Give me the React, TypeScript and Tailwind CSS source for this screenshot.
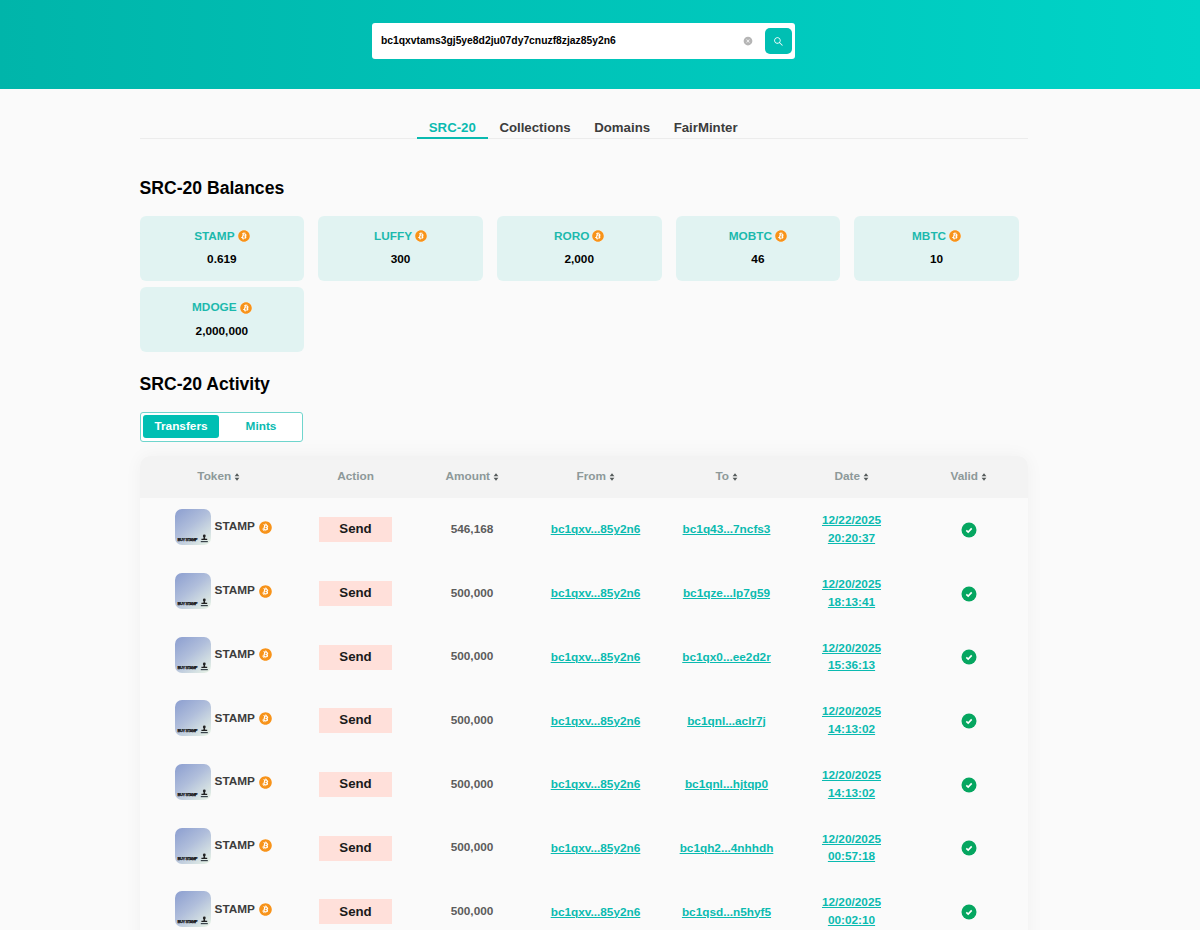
import React, { useState } from 'react';
import { AiFillCloseCircle, AiOutlineSearch } from 'react-icons/ai';
import { FaBitcoin } from 'react-icons/fa';

const ADDRESS = 'bc1qxvtams3gj5ye8d2ju07dy7cnuzf8zjaz85y2n6';

const tabs = ['SRC-20', 'Collections', 'Domains', 'FairMinter'];

const balances = [
  { tick: 'STAMP', amount: '0.619' },
  { tick: 'LUFFY', amount: '300' },
  { tick: 'RORO', amount: '2,000' },
  { tick: 'MOBTC', amount: '46' },
  { tick: 'MBTC', amount: '10' },
  { tick: 'MDOGE', amount: '2,000,000' },
];

const columns = [
  { label: 'Token', sortable: true },
  { label: 'Action', sortable: false },
  { label: 'Amount', sortable: true },
  { label: 'From', sortable: true },
  { label: 'To', sortable: true },
  { label: 'Date', sortable: true },
  { label: 'Valid', sortable: true },
];

const transfers = [
  { amount: '546,168', to: 'bc1q43...7ncfs3', date: '12/22/2025', time: '20:20:37' },
  { amount: '500,000', to: 'bc1qze...lp7g59', date: '12/20/2025', time: '18:13:41' },
  { amount: '500,000', to: 'bc1qx0...ee2d2r', date: '12/20/2025', time: '15:36:13' },
  { amount: '500,000', to: 'bc1qnl...aclr7j', date: '12/20/2025', time: '14:13:02' },
  { amount: '500,000', to: 'bc1qnl...hjtqp0', date: '12/20/2025', time: '14:13:02' },
  { amount: '500,000', to: 'bc1qh2...4nhhdh', date: '12/20/2025', time: '00:57:18' },
  { amount: '500,000', to: 'bc1qsd...n5hyf5', date: '12/20/2025', time: '00:02:10' },
];

const rowGrid = 'grid grid-cols-[158px_116px_117px_130px_132px_118px_116px] items-center justify-items-center';
const link = 'text-[#0abab0] underline decoration-1 underline-offset-1';

const BitcoinBadge = ({ className }: { className: string }) => (
  <span className={`inline-flex rounded-full bg-white ${className}`}>
    <FaBitcoin className="w-full h-full text-[#f7931a]" />
  </span>
);

const SortIcon = () => (
  <svg width="6" height="8" viewBox="0 0 6 8" fill="#555b5b" className="ml-[2.5px]">
    <path d="M3 0.2 5.4 3.3H0.6Z" />
    <path d="M3 7.8 0.6 4.7H5.4Z" />
  </svg>
);

const StampThumb = () => (
  <svg width="36" height="36" viewBox="0 0 36 36">
    <defs>
      <linearGradient id="thumb" x1="0.1" y1="0" x2="0.9" y2="1">
        <stop offset="0" stopColor="#8fa1d1" />
        <stop offset="0.45" stopColor="#b0bedb" />
        <stop offset="1" stopColor="#e6f1e6" />
      </linearGradient>
    </defs>
    <rect width="36" height="36" rx="7" fill="url(#thumb)" />
    <text x="2.6" y="32.3" fontSize="4.1" fontWeight="900" textLength="20" stroke="#111" strokeWidth="0.25" fill="#111">BUY STAMP</text>
    <circle cx="29.3" cy="26.9" r="1.4" fill="#222" />
    <path d="M28.7 27h1.2l.3 2.7h2v1.4h-5.8v-1.4h2Z" fill="#222" />
    <path d="M25.8 32h7v1.2h-7Z" fill="#39434a" />
  </svg>
);

const ValidIcon = () => (
  <svg width="16" height="16" viewBox="0 0 16 16">
    <circle cx="8" cy="8" r="7.5" fill="#05a660" />
    <path d="m5.3 8.3 1.9 1.8 3.5-3.7" fill="none" stroke="#fff" strokeWidth="1.6" />
  </svg>
);

const App: React.FC = () => {
  const [query, setQuery] = useState(ADDRESS);
  const [activeTab, setActiveTab] = useState('SRC-20');
  const [view, setView] = useState<'Transfers' | 'Mints'>('Transfers');

  return (
    <div className="h-[930px] overflow-hidden bg-[#fafafa] font-['Liberation_Sans',Arial,sans-serif] font-bold text-[11.8px] text-black">
      <header className="h-[88.5px] pt-[23px] pl-[372px] bg-linear-to-r from-[#00b5aa] to-[#00d4c8]">
        <div className="flex items-center w-[423px] h-9 pl-[9px] pr-[3.5px] bg-white rounded-[3px]">
          <input
            value={query}
            onChange={(e) => setQuery(e.target.value)}
            className="flex-1 text-[10.33px] outline-none"
          />
          <button onClick={() => setQuery('')} className="mr-[12.5px] text-[#b5b5b5]">
            <AiFillCloseCircle size={10} />
          </button>
          <button className="flex items-center justify-center w-[26.5px] h-[26.5px] rounded-[5px] bg-[#00bfb3] text-white">
            <AiOutlineSearch size={11} />
          </button>
        </div>
      </header>

      <main className="w-[888px] ml-[139.5px]">
        <nav className="flex h-[50px] pt-[27px] pl-[277.5px] border-b border-[#ececec] text-[13.23px]">
          {tabs.map((tab) => (
            <button
              key={tab}
              onClick={() => setActiveTab(tab)}
              className={`h-[23px] px-[11.8px] pt-[3px] leading-4 border-b-2 ${
                activeTab === tab ? 'text-[#0abab0] border-[#0abab0]' : 'text-[#3c3c3c] border-transparent'
              }`}
            >
              {tab}
            </button>
          ))}
        </nav>

        <h2 className="mt-[37px] text-[17.6px] leading-6">SRC-20 Balances</h2>
        <div className="flex flex-wrap mt-4 gap-x-[14px] gap-y-[6.4px]">
          {balances.map((b) => (
            <div key={b.tick} className="flex flex-col items-center w-[164.7px] h-[65.3px] pt-[11px] rounded-[6px] bg-[#e1f3f2]">
              <div className="flex items-center gap-[3px] h-5 text-[#1cb9ad]">
                {b.tick}
                <BitcoinBadge className="w-3 h-3 mb-px" />
              </div>
              <div className="mt-[2.5px] leading-5">{b.amount}</div>
            </div>
          ))}
        </div>

        <h2 className="mt-5 text-[17.6px] leading-6">SRC-20 Activity</h2>
        <div className="flex w-[163px] h-[30px] mt-[15.5px] p-[2.5px] rounded-[3px] border border-[#6fd5cd] bg-white">
          {(['Transfers', 'Mints'] as const).map((v) => (
            <button
              key={v}
              onClick={() => setView(v)}
              className={`rounded-[3px] ${v === 'Transfers' ? 'w-[77px]' : 'w-[81px] pl-1'} ${
                view === v ? 'bg-[#00bfb3] text-white' : 'text-[#0abab0]'
              }`}
            >
              {v}
            </button>
          ))}
        </div>

        <section className="mt-[14px] rounded-t-[10px] shadow-[0_0_18px_rgba(0,0,0,0.045)]">
          <div className={`${rowGrid} h-[42px] rounded-t-[10px] bg-[#f3f3f3] text-[#8d9999]`}>
            {columns.map((c) => (
              <div key={c.label} className="flex items-center">
                {c.label}
                {c.sortable && <SortIcon />}
              </div>
            ))}
          </div>
          {transfers.map((t) => (
            <div key={t.to} className={`${rowGrid} h-[63.7px] bg-[#fafafa]`}>
              <div className="flex items-center ml-[10px] mb-[5px] text-[#3c3c3c]">
                <StampThumb />
                <span className="ml-1 mr-[4.5px]">STAMP</span>
                <BitcoinBadge className="w-[13px] h-[13px]" />
              </div>
              <div className="flex items-center justify-center w-[73.5px] h-[25px] pb-px bg-[#ffe0da] text-[13.26px] text-[#1a1a1a]">Send</div>
              <div className="text-[#5c5c5c]">{t.amount}</div>
              <a className={`${link} mt-px`}>bc1qxv...85y2n6</a>
              <a className={`${link} mt-px`}>{t.to}</a>
              <a className={`${link} text-center leading-[17.7px]`}>
                {t.date}
                <br />
                {t.time}
              </a>
              <ValidIcon />
            </div>
          ))}
        </section>
      </main>
    </div>
  );
};

export default App;
